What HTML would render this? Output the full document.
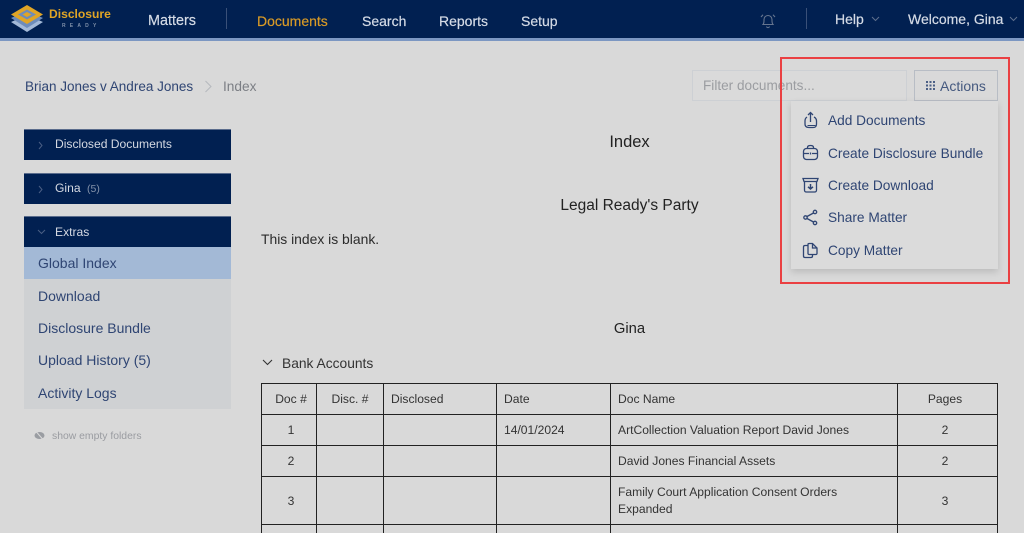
<!DOCTYPE html>
<html lang="en">
<head>
<meta charset="utf-8">
<title>Index</title>
<style>
html,body{margin:0;padding:0;width:1024px;height:533px;overflow:hidden;}
body{background:#d9d9d9;font-family:"Liberation Sans",sans-serif;color:#2b2b2b;}
#w{position:relative;width:1024px;height:533px;overflow:hidden;background:#d9d9d9;}
.t{position:absolute;white-space:nowrap;line-height:16px;}
.b{position:absolute;}
.nav{color:#d5dbe6;font-size:14px;top:13px;-webkit-text-stroke:.2px #d5dbe6;}
.bar{position:absolute;left:24px;width:207px;background:#012051;border-top:1px solid #5a6c8c;box-sizing:border-box;height:31px;}
.side{color:#d5d9e2;font-size:12.100px;left:55px;}
.menu{color:#2f4573;font-size:13.700px;left:828px;}
.sl{color:#2f4573;font-size:14px;left:38px;}
.h{color:#222;left:262px;width:735px;text-align:center;}
table{position:absolute;left:261px;top:383px;width:736px;border-collapse:collapse;table-layout:fixed;font-size:12.100px;color:#333;}
td,th{border:1px solid #222;padding:1px 7px 0;font-weight:normal;text-align:left;line-height:17px;}
.c{text-align:center;}
.c1{padding-left:11px;padding-right:7px;}
.c6{padding-right:12px;}
</style>
</head>
<body>
<div id="w">
<div class="b" style="left:0;top:0;width:1024px;height:38px;background:#012051"></div>
<div class="b" style="left:0;top:38px;width:1024px;height:3px;background:#7c97c2"></div>

<svg class="b" style="left:10px;top:4px" width="34" height="30" viewBox="0 0 34 30">
<path d="M1 18 L17 11 L33 18 L17 28 Z" fill="#a3b9d8"/>
<path d="M1 14 L17 7 L33 14 L17 24 Z" fill="#6d8cbb"/>
<path d="M1 10.500 L17 1 L33 10.500 L17 20 Z" fill="#e0a526"/>
<path d="M8 10.500 L17 5.500 L26 10.500 L17 15.500 Z" fill="#6d8cbb"/>
<path d="M12.500 10.500 L17 8 L21.500 10.500 L17 13 Z" fill="#e0a526"/>
</svg>
<div class="t" style="left:49px;top:6px;font-size:12.100px;font-weight:bold;color:#e0a526">Disclosure</div>
<div class="t" style="left:62px;top:18px;font-size:5px;font-weight:bold;color:#7f8fa8;letter-spacing:4.200px">READY</div>

<div class="t nav" style="left:148px;font-size:14.400px">Matters</div>
<div class="b" style="left:226px;top:8px;width:1px;height:21px;background:#3a5078"></div>
<div class="t nav" style="left:257px;color:#d99a26;-webkit-text-stroke:.2px #d99a26">Documents</div>
<div class="t nav" style="left:362px;">Search</div>
<div class="t nav" style="left:439px;">Reports</div>
<div class="t nav" style="left:521px;">Setup</div>

<svg class="b" style="left:759px;top:13px" width="18" height="17" viewBox="0 0 18 17" fill="none" stroke="#66758f" stroke-width="1.100">
<path d="M4 11.500 C5.200 10 5 8 5 6.500 C5 4.200 6.800 2.500 9 2.500 C11.200 2.500 13 4.200 13 6.500 C13 8 12.800 10 14 11.500 Z"/>
<path d="M7.500 13.500 C8 15 10 15 10.500 13.500"/>
<path d="M2 4 L4 1.800 M16 4 L14 1.800"/>
</svg>
<div class="b" style="left:806px;top:8px;width:1px;height:21px;background:#3a5078"></div>
<div class="t nav" style="left:835px;top:11px;">Help</div>
<svg class="b" style="left:871px;top:16px" width="9" height="6" viewBox="0 0 9 6" fill="none" stroke="#5e6f8d"><path d="M1 1 L4.500 4.500 L8 1"/></svg>
<div class="t nav" style="left:908px;top:11px;">Welcome, Gina</div>
<svg class="b" style="left:1009px;top:16px" width="9" height="6" viewBox="0 0 9 6" fill="none" stroke="#5e6f8d"><path d="M1 1 L4.500 4.500 L8 1"/></svg>

<div class="t" style="left:25px;top:79px;font-size:13.500px;color:#2f4573">Brian Jones v Andrea Jones</div>
<svg class="b" style="left:204px;top:80px" width="9" height="13" viewBox="0 0 9 13" fill="none" stroke="#b5b8bd"><path d="M1.500 1 L7 6.500 L1.500 12"/></svg>
<div class="t" style="left:223px;top:79px;font-size:13.700px;color:#7c7f85">Index</div>

<div class="b" style="left:692px;top:70px;width:215px;height:31px;box-sizing:border-box;border:1px solid #cdd0d4;background:#dadada"></div>
<div class="t" style="left:703px;top:78px;font-size:13.600px;color:#9b9da1">Filter documents...</div>
<div class="b" style="left:914px;top:70px;width:84px;height:31px;box-sizing:border-box;border:1px solid #b8bdc5;background:#d9d9d9"></div>
<svg class="b" style="left:926px;top:81px" width="9" height="9" viewBox="0 0 9 9" fill="#4b5f85">
<rect x="0" y="0" width="2" height="2"/><rect x="3.500" y="0" width="2" height="2"/><rect x="7" y="0" width="2" height="2"/>
<rect x="0" y="3.500" width="2" height="2"/><rect x="3.500" y="3.500" width="2" height="2"/><rect x="7" y="3.500" width="2" height="2"/>
<rect x="0" y="7" width="2" height="2"/><rect x="3.500" y="7" width="2" height="2"/><rect x="7" y="7" width="2" height="2"/>
</svg>
<div class="t" style="left:940px;top:78px;font-size:14px;color:#45597f">Actions</div>

<div class="b" style="left:791px;top:101px;width:207px;height:168px;background:#dbdbdb;box-shadow:0 3px 7px rgba(0,0,0,.14)"></div>

<svg class="b" style="left:802px;top:111px" width="17" height="18" viewBox="0 0 17 18" fill="none" stroke="#2f4573" stroke-width="1.300">
<path d="M5 6 C3.500 7 3 8 3 10 L3 13 C3 15.500 4.500 16.500 7 16.500 L11 16.500 C13.500 16.500 14.500 15.500 14.500 13 L14.500 10 C14.500 8 14 7 12 6"/>
<path d="M8.500 11 L8.500 2 M6 4 L8.500 1.500 L11 4"/>
<path d="M5.500 14.500 L13.500 14.500" stroke-width="1"/>
</svg>
<div class="t menu" style="top:113px">Add Documents</div>

<svg class="b" style="left:802px;top:144px" width="17" height="17" viewBox="0 0 17 17" fill="none" stroke="#2f4573" stroke-width="1.300">
<rect x="1.500" y="4.500" width="14" height="11" rx="3"/>
<path d="M5.500 4.500 L5.500 3.500 C5.500 2 6.500 1.500 8.500 1.500 C10.500 1.500 11.500 2 11.500 3.500 L11.500 4.500"/>
<path d="M1.500 9.500 L7 9.500 M10 9.500 L15.500 9.500 M8.500 8.500 L8.500 10.500"/>
</svg>
<div class="t menu" style="top:146px">Create Disclosure Bundle</div>

<svg class="b" style="left:802px;top:177px" width="17" height="16" viewBox="0 0 17 16" fill="none" stroke="#2f4573" stroke-width="1.300">
<path d="M1 1.500 L16 1.500 L15 4.500 L2 4.500 Z"/>
<path d="M2.500 4.500 L2.500 13 C2.500 14.500 3 15 4.500 15 L12.500 15 C14 15 14.500 14.500 14.500 13 L14.500 4.500"/>
<path d="M8.500 7 L8.500 12 M6 9.800 L8.500 12 L11 9.800" stroke-width="1.500"/>
</svg>
<div class="t menu" style="top:178px">Create Download</div>

<svg class="b" style="left:802px;top:209px" width="17" height="17" viewBox="0 0 17 17" fill="none" stroke="#2f4573" stroke-width="1.300">
<circle cx="3.500" cy="8.500" r="1.700"/><circle cx="13" cy="3" r="1.700"/><circle cx="13" cy="14" r="1.700"/>
<path d="M5 7.500 L11.500 4 M5 9.500 L11.500 13"/>
</svg>
<div class="t menu" style="top:210px">Share Matter</div>

<svg class="b" style="left:802px;top:242px" width="17" height="17" viewBox="0 0 17 17" fill="none" stroke="#2f4573" stroke-width="1.300">
<path d="M6 3.500 L3 3.500 C2 3.500 1.500 4 1.500 5 L1.500 14 C1.500 15.200 2 15.500 3 15.500 L9 15.500 C10 15.500 10.500 15 10.500 14 L10.500 12.500"/>
<path d="M6 2.500 C6 1.800 6.500 1.500 7 1.500 L10.500 1.500 L15 6 L15 11.500 C15 12 14.500 12.500 14 12.500 L7 12.500 C6.500 12.500 6 12 6 11.500 Z"/>
<path d="M10.500 1.500 L10.500 6 L15 6"/>
</svg>
<div class="t menu" style="top:243px">Copy Matter</div>

<div class="b" style="left:780px;top:57px;width:230px;height:227px;box-sizing:border-box;border:2px solid #ea4042"></div>

<div class="bar" style="top:129px"></div>
<svg class="b" style="left:38px;top:141px" width="5" height="9" viewBox="0 0 5 9" fill="none" stroke="#4a5e84"><path d="M1 1 L4 4.500 L1 8"/></svg>
<div class="t side" style="top:136px">Disclosed Documents</div>
<div class="bar" style="top:173px"></div>
<svg class="b" style="left:38px;top:185px" width="5" height="9" viewBox="0 0 5 9" fill="none" stroke="#4a5e84"><path d="M1 1 L4 4.500 L1 8"/></svg>
<div class="t side" style="top:180px">Gina</div>
<div class="t" style="left:87px;top:181px;font-size:10.500px;color:#8391a9">(5)</div>
<div class="bar" style="top:216px"></div>
<svg class="b" style="left:37px;top:229px" width="9" height="6" viewBox="0 0 9 6" fill="none" stroke="#4a5e84"><path d="M1 1 L4.500 4.500 L8 1"/></svg>
<div class="t side" style="top:224px">Extras</div>
<div class="b" style="left:24px;top:247px;width:207px;height:32px;background:#a3b9d6"></div>
<div class="b" style="left:24px;top:279px;width:207px;height:130px;background:#cfd1d3"></div>
<div class="t sl" style="top:255px">Global Index</div>
<div class="t sl" style="top:288px">Download</div>
<div class="t sl" style="top:320px">Disclosure Bundle</div>
<div class="t sl" style="top:352px">Upload History (5)</div>
<div class="t sl" style="top:385px">Activity Logs</div>
<svg class="b" style="left:34px;top:431px" width="11" height="9" viewBox="0 0 11 9"><ellipse cx="5.500" cy="4.500" rx="5" ry="3.500" fill="#9a9da2"/><path d="M2 0.500 L9 8.500" stroke="#d9d9d9" stroke-width="1"/></svg>
<div class="t" style="left:52px;top:429px;font-size:10.400px;color:#9a9ca1">show empty folders</div>

<div class="t h" style="top:134px;font-size:16.500px;left:262px">Index</div>
<div class="t h" style="top:198px;font-size:15.500px;left:262px">Legal Ready's Party</div>
<div class="t" style="left:261px;top:231px;font-size:13.900px;color:#2b2b2b">This index is blank.</div>
<div class="t h" style="top:321px;font-size:14.800px;left:262px">Gina</div>
<svg class="b" style="left:262px;top:359px" width="11" height="7" viewBox="0 0 11 7" fill="none" stroke="#333" stroke-width="1.100"><path d="M1 1 L5.500 5.500 L10 1"/></svg>
<div class="t" style="left:282px;top:356px;font-size:13.800px;color:#333">Bank Accounts</div>

<table>
<colgroup><col style="width:55px"><col style="width:67px"><col style="width:113px"><col style="width:114px"><col style="width:287px"><col style="width:100px"></colgroup>
<tr style="height:31px"><td class="c c1">Doc #</td><td class="c">Disc. #</td><td>Disclosed</td><td>Date</td><td>Doc Name</td><td class="c c6">Pages</td></tr>
<tr style="height:31px"><td class="c c1">1</td><td></td><td></td><td>14/01/2024</td><td>ArtCollection Valuation Report David Jones</td><td class="c c6">2</td></tr>
<tr style="height:31px"><td class="c c1">2</td><td></td><td></td><td></td><td>David Jones Financial Assets</td><td class="c c6">2</td></tr>
<tr style="height:48px"><td class="c c1">3</td><td></td><td></td><td></td><td>Family Court Application Consent Orders<br>Expanded</td><td class="c c6">3</td></tr>
<tr style="height:31px"><td></td><td></td><td></td><td></td><td></td><td></td></tr>
</table>
</div>
</body>
</html>
